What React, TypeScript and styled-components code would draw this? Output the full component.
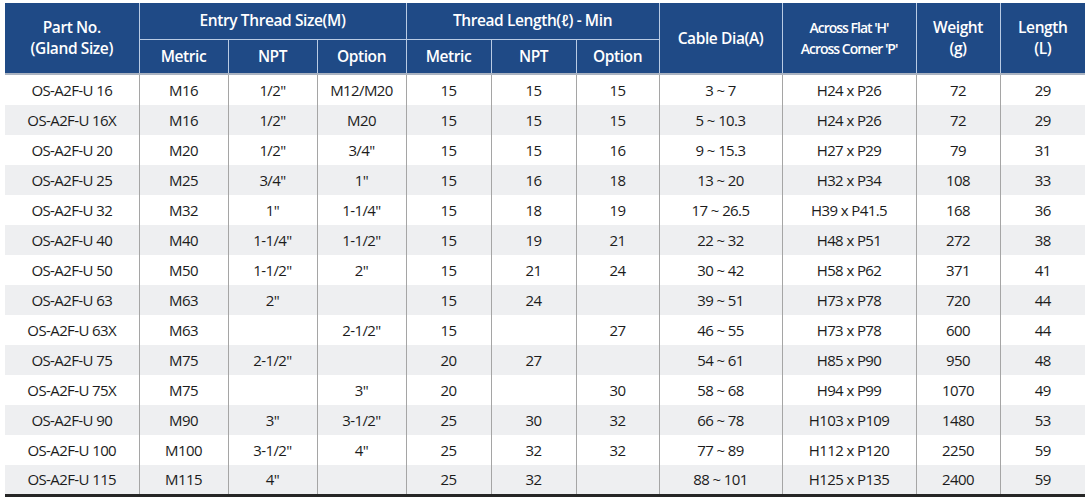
import React from "react";
import styled, { createGlobalStyle } from "styled-components";

const Global = createGlobalStyle`
  html, body { margin: 0; padding: 0; background: #ffffff; }
  body { font-family: "Open Sans", "Noto Sans", sans-serif; }
`;

const Wrap = styled.div`
  padding: 3px 5px 0 5px;
`;

const Table = styled.table`
  border-collapse: collapse;
  table-layout: fixed;
  width: 1080px;
  border-bottom: 3px solid #262626;
`;

const HeadCell = styled.th<{ $first?: boolean; $narrow?: boolean; $lineTop?: boolean }>`
  background: #1f4a86;
  color: #ffffff;
  font-weight: 600;
  font-size: ${(p) => (p.$narrow ? "14px" : "15.5px")};
  letter-spacing: ${(p) => (p.$narrow ? "-1px" : "-0.4px")};
  line-height: 21px;
  text-align: center;
  vertical-align: middle;
  padding: 0;
  border-left: ${(p) => (p.$first ? "none" : "1px solid #b9cbe4")};
  border-top: ${(p) => (p.$lineTop ? "1px solid #b9cbe4" : "none")};
`;

const HeadRow = styled.tr<{ $h: number }>`
  height: ${(p) => p.$h}px;
`;

const Sep = styled.tr`
  height: 2px;
  td {
    padding: 0;
    background: #aab3c1;
    height: 2px;
  }
`;

const Row = styled.tr<{ $alt: boolean }>`
  height: 30px;
  background: ${(p) => (p.$alt ? "#eeeff1" : "#ffffff")};
`;

const Cell = styled.td<{ $first?: boolean }>`
  padding: 0;
  text-align: center;
  vertical-align: middle;
  font-size: 15px;
  letter-spacing: -0.6px;
  color: #1c1c1c;
  border-left: ${(p) => (p.$first ? "none" : "1px solid #a5a5a5")};
  white-space: nowrap;
`;

const widths = [134, 89, 89, 89, 85, 85, 83, 123, 134, 84, 85];

const rows: string[][] = [
  ["OS-A2F-U 16", "M16", '1/2"', "M12/M20", "15", "15", "15", "3 ~ 7", "H24 x P26", "72", "29"],
  ["OS-A2F-U 16X", "M16", '1/2"', "M20", "15", "15", "15", "5 ~ 10.3", "H24 x P26", "72", "29"],
  ["OS-A2F-U 20", "M20", '1/2"', '3/4"', "15", "15", "16", "9 ~ 15.3", "H27 x P29", "79", "31"],
  ["OS-A2F-U 25", "M25", '3/4"', '1"', "15", "16", "18", "13 ~ 20", "H32 x P34", "108", "33"],
  ["OS-A2F-U 32", "M32", '1"', '1-1/4"', "15", "18", "19", "17 ~ 26.5", "H39 x P41.5", "168", "36"],
  ["OS-A2F-U 40", "M40", '1-1/4"', '1-1/2"', "15", "19", "21", "22 ~ 32", "H48 x P51", "272", "38"],
  ["OS-A2F-U 50", "M50", '1-1/2"', '2"', "15", "21", "24", "30 ~ 42", "H58 x P62", "371", "41"],
  ["OS-A2F-U 63", "M63", '2"', "", "15", "24", "", "39 ~ 51", "H73 x P78", "720", "44"],
  ["OS-A2F-U 63X", "M63", "", '2-1/2"', "15", "", "27", "46 ~ 55", "H73 x P78", "600", "44"],
  ["OS-A2F-U 75", "M75", '2-1/2"', "", "20", "27", "", "54 ~ 61", "H85 x P90", "950", "48"],
  ["OS-A2F-U 75X", "M75", "", '3"', "20", "", "30", "58 ~ 68", "H94 x P99", "1070", "49"],
  ["OS-A2F-U 90", "M90", '3"', '3-1/2"', "25", "30", "32", "66 ~ 78", "H103 x P109", "1480", "53"],
  ["OS-A2F-U 100", "M100", '3-1/2"', '4"', "25", "32", "32", "77 ~ 89", "H112 x P120", "2250", "59"],
  ["OS-A2F-U 115", "M115", '4"', "", "25", "32", "", "88 ~ 101", "H125 x P135", "2400", "59"],
];

export default function App() {
  return (
    <>
      <Global />
      <Wrap>
        <Table>
          <colgroup>
            {widths.map((w, i) => (
              <col key={i} style={{ width: w }} />
            ))}
          </colgroup>
          <thead>
            <HeadRow $h={36}>
              <HeadCell $first rowSpan={2}>
                Part No.
                <br />
                (Gland Size)
              </HeadCell>
              <HeadCell colSpan={3}>Entry Thread Size(M)</HeadCell>
              <HeadCell colSpan={3}>Thread Length(ℓ) - Min</HeadCell>
              <HeadCell rowSpan={2}>Cable Dia(A)</HeadCell>
              <HeadCell rowSpan={2} $narrow>
                Across Flat 'H'
                <br />
                Across Corner 'P'
              </HeadCell>
              <HeadCell rowSpan={2}>
                Weight
                <br />
                (g)
              </HeadCell>
              <HeadCell rowSpan={2}>
                Length
                <br />
                (L)
              </HeadCell>
            </HeadRow>
            <HeadRow $h={34}>
              <HeadCell $lineTop>Metric</HeadCell>
              <HeadCell $lineTop>NPT</HeadCell>
              <HeadCell $lineTop>Option</HeadCell>
              <HeadCell $lineTop>Metric</HeadCell>
              <HeadCell $lineTop>NPT</HeadCell>
              <HeadCell $lineTop>Option</HeadCell>
            </HeadRow>
            <Sep>
              <td colSpan={11} />
            </Sep>
          </thead>
          <tbody>
            {rows.map((r, i) => (
              <Row key={i} $alt={i % 2 === 1}>
                {r.map((c, j) => (
                  <Cell key={j} $first={j === 0}>
                    {c}
                  </Cell>
                ))}
              </Row>
            ))}
          </tbody>
        </Table>
      </Wrap>
    </>
  );
}
